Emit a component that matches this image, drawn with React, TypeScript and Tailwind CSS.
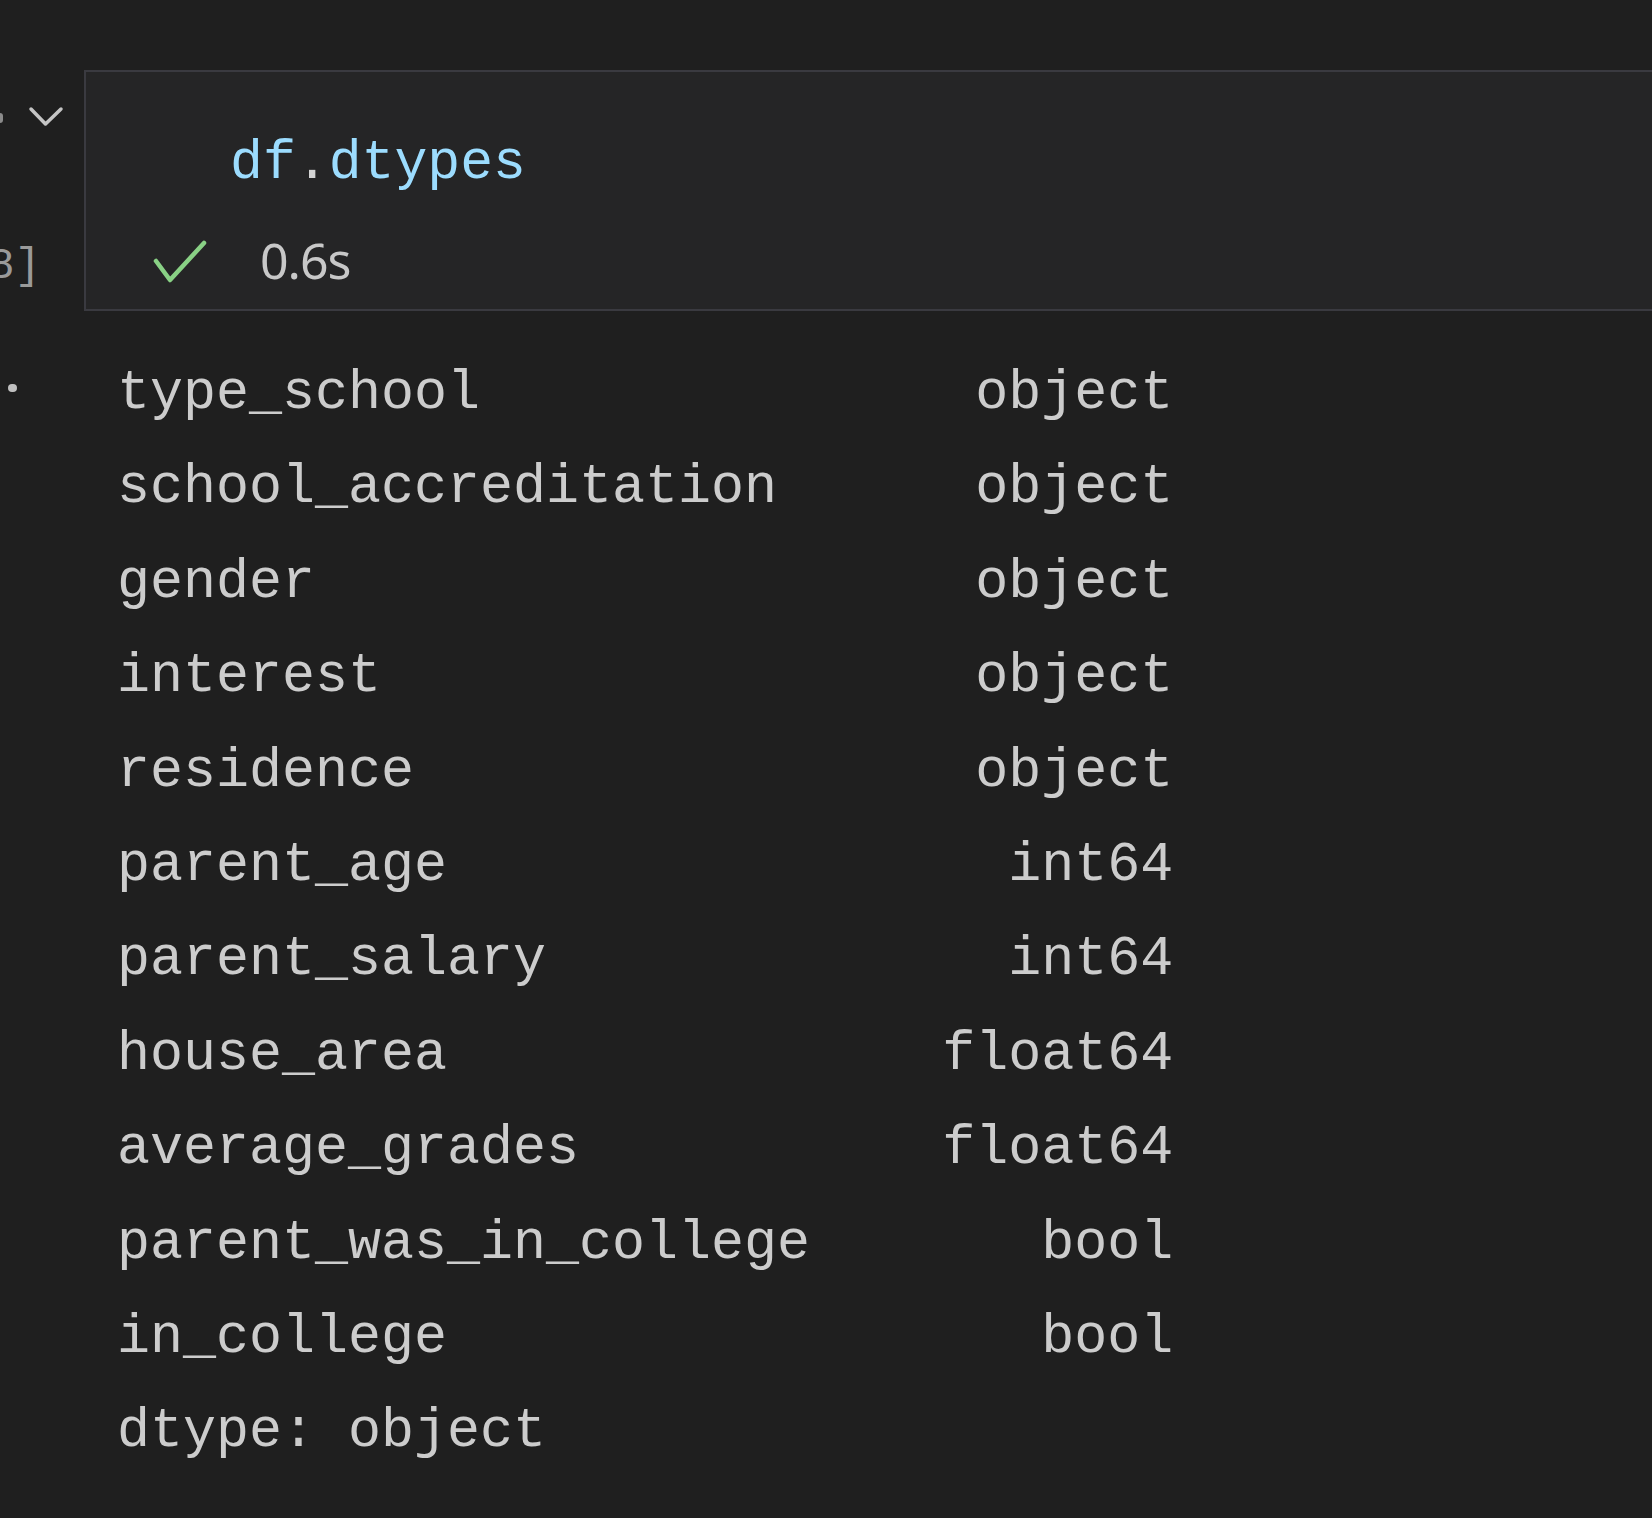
const ROWS = [
  "type_school               object",
  "school_accreditation      object",
  "gender                    object",
  "interest                  object",
  "residence                 object",
  "parent_age                 int64",
  "parent_salary              int64",
  "house_area               float64",
  "average_grades           float64",
  "parent_was_in_college       bool",
  "in_college                  bool",
  "dtype: object",
];

const mono = "font-['Liberation_Mono',monospace]";

function Chevron() {
  return (
    <svg width="36" height="22" viewBox="0 0 36 22" fill="none">
      <polyline
        points="3,3 17.5,18 33,3"
        stroke="#c5c5c5"
        strokeWidth="3.5"
        strokeLinecap="round"
        strokeLinejoin="round"
      />
    </svg>
  );
}

function Check() {
  return (
    <svg width="54" height="44" viewBox="0 0 54 44" fill="none">
      <polyline
        points="3,21 17,40 51,3"
        stroke="#89d185"
        strokeWidth="4.5"
        strokeLinecap="round"
        strokeLinejoin="round"
      />
    </svg>
  );
}

export default function App() {
  return (
    <div className="min-h-[1518px] w-full overflow-hidden bg-[#1f1f1f] pt-[70px]">
      {/* code cell */}
      <div className="flex">
        <div className="flex h-[241px] w-[84px] shrink-0 flex-col">
          <div className="flex items-start pt-[36px]">
            <span className="mt-[7px] h-[10px] w-[3px] rounded-r bg-[#8a8a8a]" />
            <span className="ml-[25px]">
              <Chevron />
            </span>
          </div>
          <div className="mt-[116px] flex w-[41px] justify-end">
            <span className={`${mono} whitespace-nowrap text-[44px] leading-[44px] text-[#9a9a9a]`}>
              [8]
            </span>
          </div>
        </div>
        <div className="h-[241px] flex-1 border-y-2 border-l-2 border-[#3a3a40] bg-[#252526]">
          <div className={`${mono} mt-[61px] pl-[144px] text-[54.8px] leading-[61px] whitespace-pre`}>
            <span className="text-[#9cdcfe]">df</span>
            <span className="text-[#d4d4d4]">.</span>
            <span className="text-[#9cdcfe]">dtypes</span>
          </div>
          <div className="mt-[41px] flex items-start">
            <span className="ml-[67px] mt-[5px]">
              <Check />
            </span>
            <span className="ml-[53px] font-['Noto_Sans',sans-serif] text-[50px] leading-[50px] tracking-[-1px] text-[#c8c8c8]">
              0.6s
            </span>
          </div>
        </div>
      </div>

      {/* output */}
      <div className="mt-[36px] flex">
        <div className="w-[117px] shrink-0">
          <div className="ml-[8px] mt-[37px] h-[8px] w-[9px] rounded-full bg-[#c0c0c0]" />
        </div>
        <div className={`${mono} text-[55px] leading-[94.4px] text-[#cccccc]`}>
          {ROWS.map((r) => (
            <div key={r} className="whitespace-pre">
              {r}
            </div>
          ))}
        </div>
      </div>
    </div>
  );
}
